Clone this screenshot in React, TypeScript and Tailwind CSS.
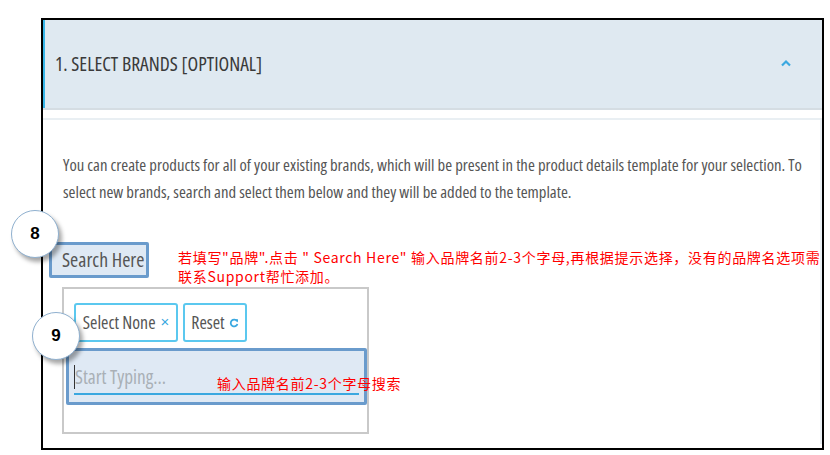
const ui = "font-['Open_Sans',sans-serif] [font-stretch:75%]";
const cn = "font-['Noto_Sans_CJK_SC','Noto_Sans',sans-serif]";

function Callout({ n, className }: { n: string; className: string }) {
  return (
    <div
      className={`absolute flex h-[48px] w-[48px] items-center justify-center rounded-full border border-[#8fb0cf] bg-white shadow-[3px_4px_4px_rgba(0,0,0,0.35)] ${className}`}
    >
      <span className="font-['Liberation_Sans',sans-serif] text-[17px] font-bold text-black">{n}</span>
    </div>
  );
}

export default function App() {
  return (
    <div className="relative h-[455px] w-[830px] overflow-hidden bg-white">
      <div className="ml-[41px] mt-[18px] h-[432px] w-[783px] border-2 border-black">
        {/* header */}
        <div className="flex h-[88px] items-center justify-between border-l-2 border-[#38b6e8] bg-[#dfe9f1] pl-[10px] pr-[30px]">
          <span className={`${ui} text-[19.6px] text-[#3a3a3a]`}>1. SELECT BRANDS [OPTIONAL]</span>
          <svg width="12" height="8" viewBox="0 0 12 8" className="mb-[2px]">
            <path d="M2 6.5 L6 2.5 L10 6.5" fill="none" stroke="#3aa8e0" strokeWidth="2.2" />
          </svg>
        </div>
        <div className="h-[2px] bg-[#d5dde3]" />
        <div className="mt-[8px] h-[326px] border-r-2 border-t-2 border-[#e9eff3]">
          <p className={`${ui} ml-[20px] mt-[31px] w-[750px] text-[16.7px] leading-[27px] text-[#555]`}>
            You can create products for all of your existing brands, which will be present in the product details template for your selection. To select new brands, search and select them below and they will be added to the template.
          </p>
          <div className="ml-[6px] mt-[37px] flex h-[36px] w-[100px] items-center rounded-[2px] border-[3px] border-[#6a9bcc] bg-[#dfe9f4] pl-[10px]">
            <span className={`${ui} text-[19.8px] text-[#555]`}>Search Here</span>
          </div>
          <div className="ml-[19px] mt-[9px] h-[147px] w-[307px] border-2 border-[#c9c9c9] pt-[14px]">
            <div className="ml-[10px] flex gap-[5px]">
              <div className="flex h-[39px] w-[104px] items-center justify-center gap-[5px] rounded-[3px] border-2 border-[#5bc8ef]">
                <span className={`${ui} text-[17.8px] text-[#555]`}>Select None</span>
                <span className="font-['Liberation_Sans',sans-serif] text-[15px] text-[#3aa8e0]">×</span>
              </div>
              <div className="flex h-[39px] w-[64px] items-center justify-center gap-[4px] rounded-[3px] border-2 border-[#5bc8ef]">
                <span className={`${ui} text-[17.8px] text-[#555]`}>Reset</span>
                <svg width="10" height="10" viewBox="0 0 10 10">
                  <path d="M8 3.2 A3.4 3.4 0 1 0 8.4 6" fill="none" stroke="#3aa8e0" strokeWidth="1.8" />
                  <path d="M6 1.2 L9 1.2 L9 4.4 Z" fill="#3aa8e0" />
                </svg>
              </div>
            </div>
            <div className="ml-[2px] mt-[6px] h-[57px] w-[301px] rounded-[2px] border-[3px] border-[#6a9bcc] bg-[#dfe9f4] px-[5px] pt-[10px]">
              <div className="flex h-[34px] items-center border-b-2 border-[#3aa8e0]">
                <span className="h-[24px] w-px bg-[#333]" />
                <span className={`${ui} text-[19.3px] text-[#a9b0b6]`}>Start Typing...</span>
              </div>
            </div>
          </div>
        </div>
      </div>

      {/* annotations */}
      <Callout n="8" className="left-[11px] top-[210px]" />
      <Callout n="9" className="left-[32px] top-[312px]" />
      <p className={`${cn} absolute left-[178px] top-[248px] whitespace-nowrap text-[14px] leading-[19px] tracking-[0.7px] text-[#ff0000]`}>
        若填写"品牌".点击 " Search Here" 输入品牌名前2-3个字母,再根据提示选择，没有的品牌名选项需
        <br />
        联系Support帮忙添加。
      </p>
      <p className={`${cn} absolute left-[217px] top-[374px] text-[14px] leading-[19px] tracking-[0.7px] text-[#ff0000]`}>
        输入品牌名前2-3个字母搜索
      </p>
    </div>
  );
}
